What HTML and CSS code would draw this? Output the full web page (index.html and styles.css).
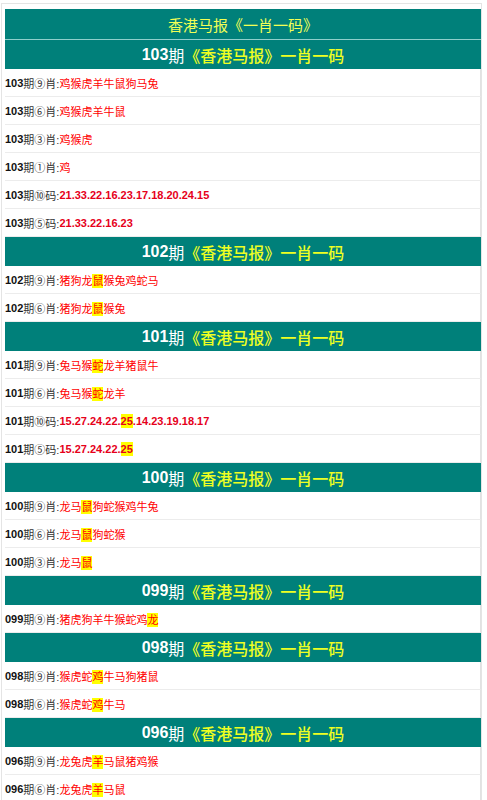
FILE: index.html
```html
<!DOCTYPE html>
<html>
<head>
    <meta charset="utf-8">
    <title>香港马报《一肖一码》</title>
    <link rel="stylesheet" href="styles.css">
</head>
<body>

<div class="page">
    <!-- Top title -->
    <div class="title">香港马报《一肖一码》</div>

    <!-- 103 -->
    <div class="issue-head"><b>103</b>期<span class="yl">《香港马报》一肖一码</span></div>
    <div class="row"><b>103</b>期⑨肖:<span class="red">鸡猴虎羊牛鼠狗马兔</span></div>
    <div class="row"><b>103</b>期⑥肖:<span class="red">鸡猴虎羊牛鼠</span></div>
    <div class="row"><b>103</b>期③肖:<span class="red">鸡猴虎</span></div>
    <div class="row"><b>103</b>期①肖:<span class="red">鸡</span></div>
    <div class="row"><b>103</b>期⑩码:<span class="num">21.33.22.16.23.17.18.20.24.15</span></div>
    <div class="row"><b>103</b>期⑤码:<span class="num">21.33.22.16.23</span></div>

    <!-- 102 -->
    <div class="issue-head"><b>102</b>期<span class="yl">《香港马报》一肖一码</span></div>
    <div class="row"><b>102</b>期⑨肖:<span class="red">猪狗龙<em class="hit">鼠</em>猴兔鸡蛇马</span></div>
    <div class="row"><b>102</b>期⑥肖:<span class="red">猪狗龙<em class="hit">鼠</em>猴兔</span></div>

    <!-- 101 -->
    <div class="issue-head"><b>101</b>期<span class="yl">《香港马报》一肖一码</span></div>
    <div class="row"><b>101</b>期⑨肖:<span class="red">兔马猴<em class="hit">蛇</em>龙羊猪鼠牛</span></div>
    <div class="row"><b>101</b>期⑥肖:<span class="red">兔马猴<em class="hit">蛇</em>龙羊</span></div>
    <div class="row"><b>101</b>期⑩码:<span class="num">15.27.24.22.<em class="hit">25</em>.14.23.19.18.17</span></div>
    <div class="row"><b>101</b>期⑤码:<span class="num">15.27.24.22.<em class="hit">25</em></span></div>

    <!-- 100 -->
    <div class="issue-head"><b>100</b>期<span class="yl">《香港马报》一肖一码</span></div>
    <div class="row"><b>100</b>期⑨肖:<span class="red">龙马<em class="hit">鼠</em>狗蛇猴鸡牛兔</span></div>
    <div class="row"><b>100</b>期⑥肖:<span class="red">龙马<em class="hit">鼠</em>狗蛇猴</span></div>
    <div class="row"><b>100</b>期③肖:<span class="red">龙马<em class="hit">鼠</em></span></div>

    <!-- 099 -->
    <div class="issue-head"><b>099</b>期<span class="yl">《香港马报》一肖一码</span></div>
    <div class="row"><b>099</b>期⑨肖:<span class="red">猪虎狗羊牛猴蛇鸡<em class="hit">龙</em></span></div>

    <!-- 098 -->
    <div class="issue-head"><b>098</b>期<span class="yl">《香港马报》一肖一码</span></div>
    <div class="row"><b>098</b>期⑨肖:<span class="red">猴虎蛇<em class="hit">鸡</em>牛马狗猪鼠</span></div>
    <div class="row"><b>098</b>期⑥肖:<span class="red">猴虎蛇<em class="hit">鸡</em>牛马</span></div>

    <!-- 096 -->
    <div class="issue-head"><b>096</b>期<span class="yl">《香港马报》一肖一码</span></div>
    <div class="row"><b>096</b>期⑨肖:<span class="red">龙兔虎<em class="hit">羊</em>马鼠猪鸡猴</span></div>
    <div class="row"><b>096</b>期⑥肖:<span class="red">龙兔虎<em class="hit">羊</em>马鼠</span></div>
</div>

</body>
</html>
```

FILE: styles.css
```css
body {
    margin: 0;
    background: #fff;
    font-family: "Liberation Sans", Arial, "Noto Sans CJK SC", sans-serif;
}

.page {
    margin: 3px 5px 0 1px;
    padding: 5px 0 0 3px;
    border: 1px solid #e4e4e4;
    border-bottom: none;
}

.title {
    height: 30px;
    display: flex;
    align-items: center;
    justify-content: center;
    background: #00807a;
    color: #f2ff55;
    font-size: 15px;
    border-bottom: 1px solid #8fcfcb;
}

.issue-head {
    height: 29px;
    display: flex;
    align-items: center;
    justify-content: center;
    background: #00807a;
    color: #fff;
    font-size: 16px;
}

.issue-head b {
    font-weight: bold;
}

.issue-head .yl {
    color: #eeff22;
    font-weight: 500;
}

.row {
    height: 27px;
    display: flex;
    align-items: center;
    border-bottom: 1px solid #ececec;
    border-right: 1px solid #e2e2e2;
    font-size: 11px;
    color: #333;
    white-space: nowrap;
}

.row b {
    color: #111;
}

.red {
    color: #f00;
}

.num {
    color: #e6001a;
    font-weight: bold;
}

.hit {
    font-style: normal;
    background: #ffff00;
    padding: 1px 0;
}
```
